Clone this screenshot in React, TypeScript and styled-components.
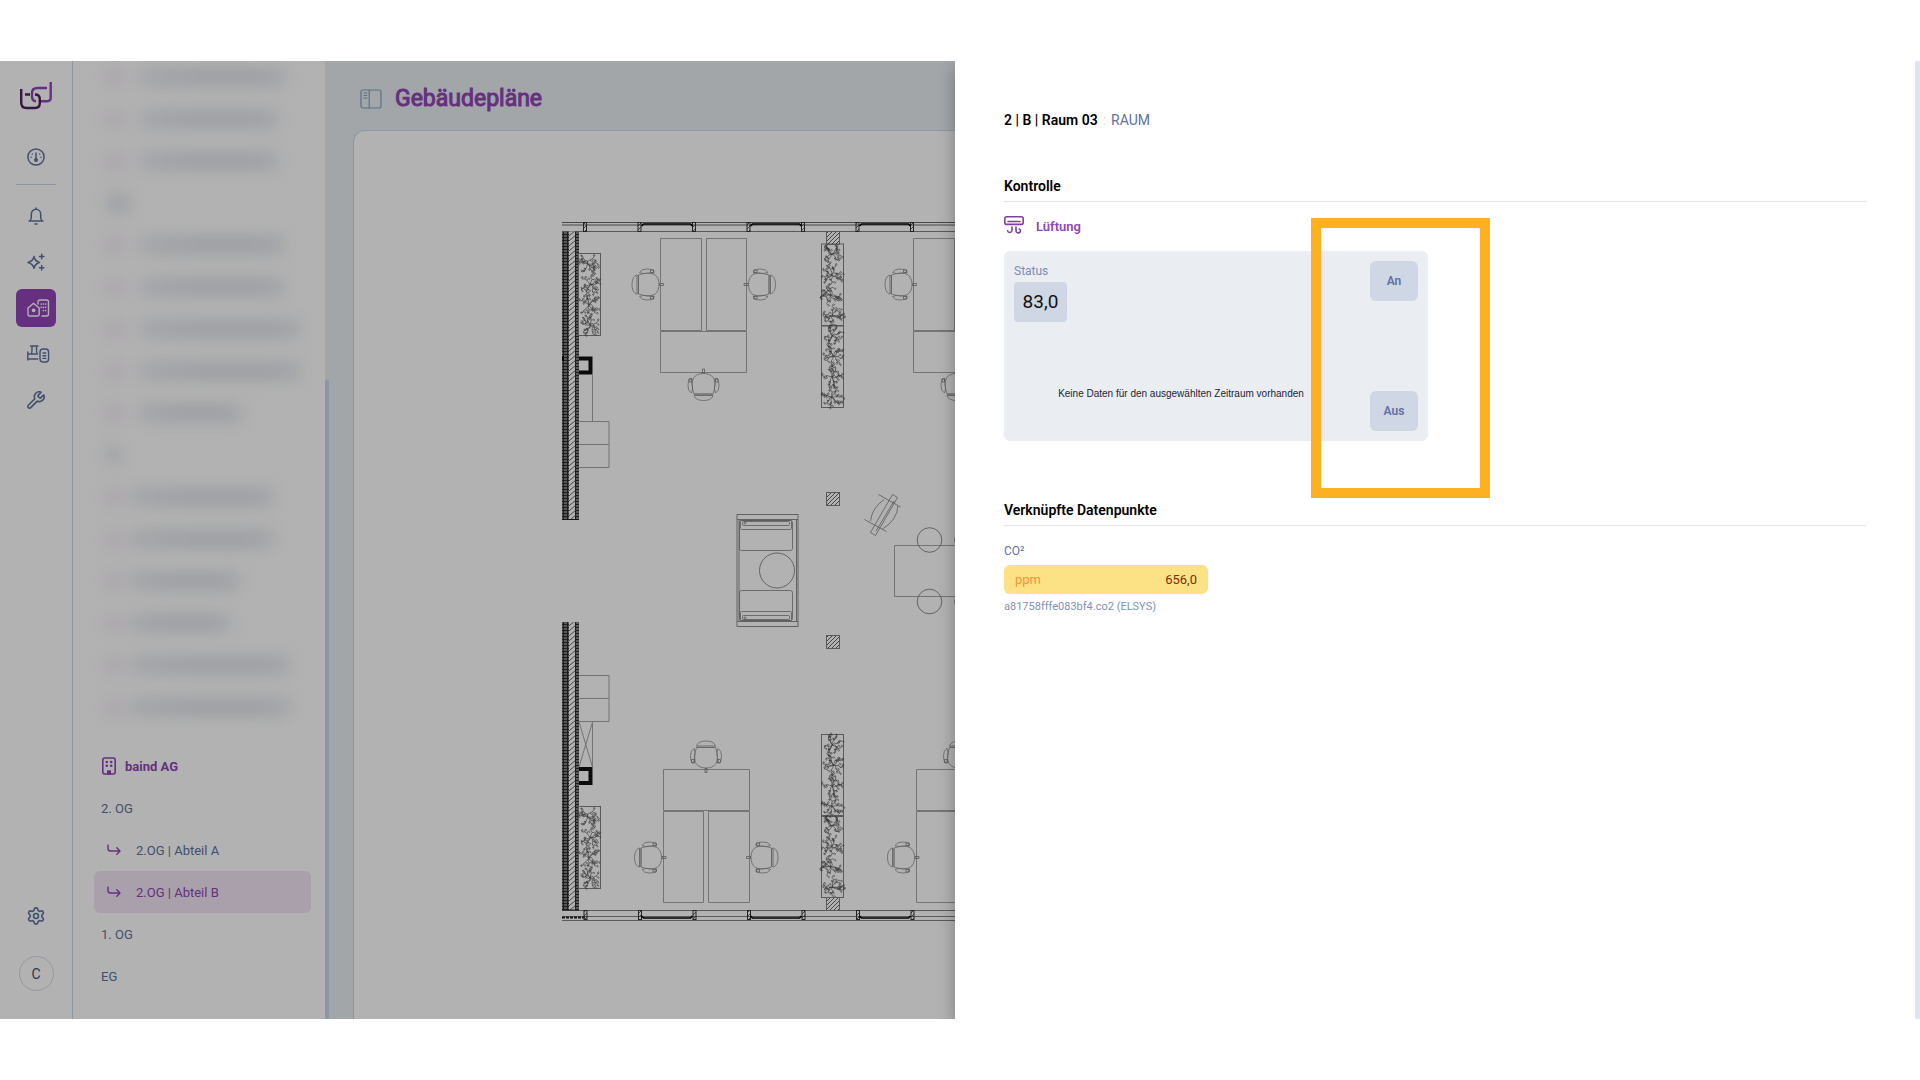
import React from "react";
import styled, { createGlobalStyle, css } from "styled-components";
import { Settings, Wrench } from "lucide-react";

const color = {
  purple: "#9146b6",
  slate: "#5f719f",
  line: "#cbd5e8",
  canvas: "#e8eef2",
  card: "#eaeef3",
  control: "#cfd6e4",
};

const GlobalStyle = createGlobalStyle`
  *, *::before, *::after { box-sizing: border-box; }
  body { margin: 0; background: #fff; font-family: Roboto, "Liberation Sans", sans-serif; }
  h1, h2, h3, p, ul { margin: 0; padding: 0; }
  ul { list-style: none; }
  button { font: inherit; border: 0; padding: 0; background: none; cursor: pointer; }
  a { color: inherit; text-decoration: none; }
  svg { display: block; }
`;

const Page = styled.div`
  padding: 61px 0;
`;

const Frame = styled.div`
  position: relative;
  display: flex;
  height: calc(100vh - 122px);
  min-height: 640px;
  overflow: hidden;
  background: #fff;
`;

const Rail = styled.nav`
  flex: 0 0 73px;
  display: flex;
  flex-direction: column;
  align-items: center;
  padding: 20px 16px 28px;
  border-right: 1px solid ${color.line};
  color: ${color.slate};
`;

const LogoLink = styled.a`
  margin-bottom: 27px;
`;

const RailGroup = styled.ul`
  display: flex;
  flex-direction: column;
  gap: 8px;
  margin-top: 12px;
`;

const RailButton = styled.button<{ $active?: boolean }>`
  display: flex;
  align-items: center;
  width: 40px;
  height: 38px;
  padding-left: 11px;
  border-radius: 6px;
  color: ${(p) => (p.$active ? "#fff" : color.slate)};
  background: ${(p) => (p.$active ? color.purple : "transparent")};
`;

const RailDivider = styled.hr`
  width: 40px;
  margin: 8px 0 0;
  border: 0;
  border-top: 1px solid ${color.line};
`;

const RailFoot = styled.div`
  display: flex;
  flex-direction: column;
  align-items: center;
  gap: 21px;
  margin-top: auto;
`;

const Avatar = styled.button`
  width: 35px;
  height: 35px;
  border: 1px solid #d5d9ec;
  border-radius: 50%;
  font-size: 14px;
  color: #454d73;
`;

const Sidebar = styled.aside`
  flex: 0 0 252px;
  display: flex;
  flex-direction: column;
  justify-content: flex-end;
  padding: 0 14px 22px 21px;
  overflow: hidden;
`;

const TreeList = styled.ul`
  margin-bottom: 17px;
  &:last-child { margin-bottom: 0; }
`;

const rowBase = css`
  display: flex;
  align-items: center;
  height: 42px;
`;

const HiddenRow = styled.li<{ $near?: boolean }>`
  ${rowBase}
  gap: ${(p) => (p.$near ? 8 : 16)}px;
  padding-left: 12px;
  filter: blur(8px);
`;

const HiddenMark = styled.span`
  width: 18px;
  height: 15px;
  background: #f3eaf3;
`;

const HiddenText = styled.span<{ $w: number }>`
  width: ${(p) => p.$w}px;
  height: 18px;
  background: linear-gradient(90deg, #e8ebf1, #dfe3ea 40%, #dfe3ea 80%, #e8ebf1);
`;

const TreeLink = styled.a<{ $active?: boolean; $head?: boolean; $nested?: boolean }>`
  ${rowBase}
  gap: ${(p) => (p.$nested ? 15 : 8)}px;
  padding-left: ${(p) => (p.$nested ? 13 : 7)}px;
  border-radius: 6px;
  font-size: 13px;
  font-weight: ${(p) => (p.$head ? 700 : 400)};
  color: ${(p) => (p.$active || p.$head ? color.purple : color.slate)};
  background: ${(p) => (p.$active ? "#f3e5f5" : "transparent")};
  svg { color: ${color.purple}; }
`;

const ScrollTrack = styled.div`
  flex: 0 0 4px;
  display: flex;
  align-items: flex-end;
  background: ${color.canvas};
`;

const ScrollThumb = styled.div`
  width: 4px;
  height: calc(200% / 3);
  border-radius: 2px;
  background: ${color.line};
`;

const Main = styled.main`
  flex: 1;
  min-width: 0;
  display: flex;
  flex-direction: column;
  padding: 20px 24px 0;
  background: ${color.canvas};
`;

const TitleBar = styled.header`
  display: flex;
  align-items: center;
  gap: 13px;
  height: 36px;
  margin-bottom: 13px;
  padding-left: 7px;
`;

const PanelToggle = styled.button`
  color: #86a0c0;
`;

const Title = styled.h1`
  font-size: 23px;
  line-height: 36px;
  font-weight: 400;
  color: ${color.purple};
  -webkit-text-stroke: 1px ${color.purple};
`;

const PlanPanel = styled.section`
  flex: 1;
  padding: 87px 0 0 208px;
  border: 1px solid ${color.line};
  border-bottom: 0;
  border-radius: 12px 12px 0 0;
  background: #fff;
  overflow: hidden;
`;

const Backdrop = styled.div`
  position: absolute;
  inset: 0;
  background: rgba(0, 0, 0, 0.3);
`;

const Drawer = styled.section`
  position: absolute;
  top: 0;
  right: 0;
  bottom: 0;
  width: calc(50% + 5px);
  padding: 48px 49px 24px;
  border-right: 5px solid #dee5ef;
  background: #fff;
  box-shadow: 0 8px 16px rgba(0, 0, 0, 0.3);
`;

const Crumb = styled.header`
  display: flex;
  gap: 5px;
  margin-bottom: 44px;
  font-size: 14px;
  line-height: 22px;
  color: ${color.slate};
`;

const CrumbTitle = styled.h2`
  font-size: 14px;
  font-weight: 600;
  color: #000;
`;

const CrumbColon = styled.span`
  color: #ccd8ee;
`;

const SectionTitle = styled.h3`
  padding-bottom: 4px;
  border-bottom: 1px solid #e2e5ee;
  font-size: 14px;
  line-height: 22px;
  font-weight: 600;
  color: #000;
`;

const Device = styled.div`
  display: flex;
  gap: 12px;
  margin: 14px 0;
  font-size: 14px;
  line-height: 20px;
  color: ${color.purple};
  svg { color: #7c3fa3; }
`;

const DeviceName = styled.span`
  padding-top: 1px;
  font-size: 13px;
  font-weight: 600;
`;

const StatusCard = styled.div`
  display: flex;
  justify-content: space-between;
  width: 424px;
  height: 190px;
  margin-bottom: 58px;
  padding: 10px;
  border-radius: 6px;
  background: ${color.card};
`;

const StatusBody = styled.div`
  flex: 1;
  display: flex;
  flex-direction: column;
  align-items: flex-start;
`;

const StatusLabel = styled.span`
  font-size: 12px;
  line-height: 20px;
  color: #7a8db5;
`;

const StatusValue = styled.output`
  margin-top: 1px;
  width: 53px;
  border-radius: 4px;
  font-size: 19px;
  line-height: 40px;
  text-align: center;
  color: #111;
  background: ${color.control};
`;

const EmptyNote = styled.p`
  align-self: stretch;
  margin-top: 62px;
  padding-right: 22px;
  font-family: "Liberation Sans", Arial, sans-serif;
  font-size: 10px;
  line-height: 20px;
  text-align: center;
  color: #1c1f33;
`;

const SwitchColumn = styled.div`
  display: flex;
  flex-direction: column;
  justify-content: space-between;
`;

const SwitchButton = styled.button`
  width: 48px;
  height: 40px;
  border-radius: 6px;
  font-size: 12px;
  font-weight: 600;
  color: #6070a3;
  background: ${color.control};
`;

const PointLabel = styled.p`
  margin-top: 15px;
  font-size: 12px;
  line-height: 20px;
  color: #6475a3;
`;

const PointValue = styled.div`
  display: flex;
  justify-content: space-between;
  width: 204px;
  margin: 4px 0 3px;
  padding: 0 11px;
  border-radius: 6px;
  font-size: 13px;
  line-height: 29px;
  color: #7c2d12;
  background: #fde185;
`;

const PointUnit = styled.span`
  color: #fb923c;
`;

const PointSource = styled.p`
  font-size: 11px;
  line-height: 20px;
  color: #7f90b6;
`;

const Highlight = styled.div`
  position: absolute;
  top: 157px;
  left: calc(50% + 351px);
  width: 179px;
  height: 280px;
  border: 10px solid #fdb022;
  pointer-events: none;
`;

/* ---------- icons ---------- */

const stroke = { fill: "none", stroke: "currentColor", strokeLinecap: "round", strokeLinejoin: "round" } as const;

const Logo = () => (
  <svg width="34" height="30" viewBox="0 0 34 30" fill="none" strokeWidth="2.400" strokeLinejoin="round">
    <path d="M28 7H18.500Q13 7 13 12V15Q13 20.200 17 20.200M22 20.200H28Q31.700 20.200 31.700 16.500V1" stroke={color.purple} />
    <path d="M2.200 8V21.500Q2.200 27 7.500 27H16Q20.800 27 20.800 22V18Q20.800 13.500 16 13.500M6 13.500H11" stroke="#4f1f63" />
  </svg>
);

const GaugeIcon = () => (
  <svg width="18" height="18" viewBox="0 0 18 18" {...stroke} strokeWidth="1.5">
    <circle cx="9" cy="9" r="8.100" />
    <path d="M9 5v6" />
    <circle cx="9" cy="12" r="1.200" fill="currentColor" />
    <path d="M4.100 9.200h.01M5.300 6h.01M12.700 6h.01M13.900 9.200h.01" />
  </svg>
);

const BellIcon = () => (
  <svg width="18" height="18" viewBox="0 0 18 18" {...stroke} strokeWidth="1.500">
    <path d="M9 1v1.200M2 14h14M3 14c1-1.200 1.300-2.400 1.300-4V7.200C4.300 4.300 6.300 2.300 9 2.300s4.700 2 4.700 4.900V10c0 1.600.3 2.800 1.300 4M8 17h2" />
  </svg>
);

const SparkIcon = () => (
  <svg width="18" height="18" viewBox="0 0 18 18" {...stroke} strokeWidth="1.500">
    <path d="M7 3.500Q7.900 8.100 12.500 9.500 7.900 10.800 7 15.300 6 10.800 1 9.500 6 8.100 7 3.500ZM14.700 1.300v4.400M12.500 3.500h4.400M14.700 12.500v4.400M12.500 14.700h4.400" />
  </svg>
);

const EstateIcon = () => (
  <svg width="24" height="18" viewBox="1 0 24 18" {...stroke} strokeWidth="1.400">
    <path d="M2 9 7.500 4.200 13.200 9V15q0 2-2 2H4q-2 0-2-2ZM12 5V2.800Q12 1 13.800 1h6.600Q22.500 1 22.500 2.800V15q0 2-2 2h-4.500" />
    <circle cx="7.600" cy="11.300" r="1.200" fill="currentColor" />
    <path d="M15.200 5h.01M17.400 5h.01M19.600 5h.01M15.200 8.300h.01M17.400 8.300h.01M19.600 8.300h.01M17.400 11.500h.01M19.600 11.500h.01" strokeWidth="1.700" />
  </svg>
);

const PlantIcon = () => (
  <svg width="24" height="18" viewBox="1 0 24 18" {...stroke} strokeWidth="1.400">
    <path d="M4.500 1h7.500M6 1v4.500L5.500 9M10.500 1v4.500l.5 3.500M1.800 7v8M1.800 9h9.700M1.800 14h10" />
    <rect x="14" y="4" width="8.600" height="13" rx="3" />
    <path d="M17 8h2.800M17 10.700h2.800M17 13.400h2.800" />
  </svg>
);

const PanelIcon = () => (
  <svg width="22" height="20" viewBox="0 0 22 20" {...stroke} strokeWidth="1.200">
    <rect x="1" y="1" width="20" height="18" rx="2" />
    <path d="M9.200 1v18M4 4h2.800M4 6.500h2.800M4 9h2.800" />
  </svg>
);

const BuildingIcon = () => (
  <svg width="16" height="18" viewBox="0 0 16 18" {...stroke} strokeWidth="1.600">
    <rect x="1.800" y="1" width="12.400" height="16" rx="2" />
    <path d="M5.800 5h.01M10.200 5h.01M5.800 8.700h.01M10.200 8.700h.01" strokeWidth="2.600" />
    <path d="M6.800 17v-3h2.400v3Z" fill="currentColor" />
  </svg>
);

const ArrowIcon = () => (
  <svg width="14" height="12" viewBox="0 0 14 12" {...stroke} strokeWidth="1.400">
    <path d="M1 1v3.500Q1 7 3.500 7H13M9.800 3.800 13 7l-3.200 3.200" />
  </svg>
);

const VentIcon = () => (
  <svg width="20" height="18" viewBox="0 0 20 18" {...stroke} strokeWidth="1.600">
    <rect x=".8" y=".8" width="18.400" height="7.600" rx="2" />
    <path d="M4 5.500h12M8 11v3.700a2.300 2.300 0 0 1-4.500 0M12 11v3.700a2.200 2.200 0 0 0 4.400 0q0-1.500-1.200-1.700" />
  </svg>
);

/* ---------- floor plan ---------- */

const inkThin = "#a6a6a6";
const inkMid = "#828282";

function Chair({ x, y, turn }: { x: number; y: number; turn: number }) {
  // Drawn facing right, its knob on the desk edge at (0, 0)
  return (
    <g transform={`translate(${x} ${y}) rotate(${turn})`} fill="none" stroke="#8f8f8f" strokeWidth=".8">
      <path d="M-22-9.500Q-12-13-6-10 -1.500-7-1.500 0 -1.500 7-6 10 -12 13-22 9.500Z" />
      <path d="M-24-9.500q-4.500 2-4.500 9.500t4.500 9.500l2-1v-17Z" />
      <path d="M-21-12q2-3.500 7-3.500t7.500 1.500v2.500h-5q-6 1.500-9.500-.5ZM-21 12q2 3.500 7 3.500t7.500-1.500v-2.500h-5q-6-1.500-9.500 .5Z" />
      <path d="M-23.500-9v18M-1-1h4v2h-4ZM-10-14.500h3v2.500h-3ZM-10 14.500h3v-2.500h-3Z" stroke={inkMid} />
    </g>
  );
}

function foliage(seed: number, w: number, h: number) {
  let s = seed;
  const rnd = () => {
    s = (s * 16807) % 2147483647;
    return s / 2147483647;
  };
  let d = "";
  const clumps = 4;
  for (let i = 0; i < clumps; i++) {
    const cx = w / 2 + (rnd() - 0.5) * 4;
    const cy = ((i + 0.5) * h) / clumps;
    for (let k = 0; k < 9; k++) {
      const a = (k / 9) * Math.PI * 2 + rnd() * 0.6;
      let px = cx;
      let py = cy;
      let dir = a;
      d += `M${px.toFixed(1)} ${py.toFixed(1)}`;
      for (let j = 0; j < 4; j++) {
        // each stem wanders a little and carries a round leaf at its joints
        dir = a + (rnd() - 0.5) * 1.6;
        px += Math.cos(dir) * 2.6;
        py += Math.sin(dir) * 2.6;
        d += `L${px.toFixed(1)} ${py.toFixed(1)}`;
        if (j > 0) {
          const side = dir + (rnd() > 0.5 ? 1.2 : -1.2);
          const lx = px + Math.cos(side) * 2;
          const ly = py + Math.sin(side) * 2;
          d += `L${lx.toFixed(1)} ${ly.toFixed(1)}a.8 .8 0 1 1 .5 1M${px.toFixed(1)} ${py.toFixed(1)}`;
        }
      }
    }
  }
  return d;
}

function Planter({ x, y, w = 22, h = 82, seed }: { x: number; y: number; w?: number; h?: number; seed: number }) {
  return (
    <g transform={`translate(${x} ${y})`} fill="none">
      <rect width={w} height={h} stroke={inkMid} />
      <path d={foliage(seed, w, h)} stroke="#4a4a4a" strokeWidth=".6" />
    </g>
  );
}

function WallSegment({ y, h }: { y: number; h: number }) {
  return (
    <g>
      <rect x="562" y={y} width="17" height={h} fill="#fff" />
      <rect x="562" y={y} width="7" height={h} fill="url(#brick)" />
      <rect x="569" y={y} width="6" height={h} fill="url(#hatch)" />
      <rect x="575" y={y} width="4" height={h} fill="url(#brick)" />
      <path d={`M562 ${y + h}h17`} stroke="#222" />
    </g>
  );
}

const Pillar = ({ y }: { y: number }) => (
  <rect x="826.500" y={y} width="13" height="13" fill="url(#wideHatch)" stroke={inkMid} />
);

const Bracket = ({ y }: { y: number }) => (
  <path d={`M579 ${y + 2}h11.500v14H579`} fill="none" stroke="#111" strokeWidth="4" />
);

function DeskTop({ dx }: { dx: number }) {
  return (
    <g transform={`translate(${dx} 0)`}>
      <g fill="none" stroke={inkThin}>
        <path d="M660.500 238.500h41v92h-41ZM706.500 238.500h40v92h-40ZM660.500 331.500h86v41h-86Z" />
      </g>
      <Chair x={660.5} y={284.500} turn={0} />
      <Chair x={747} y={284.500} turn={180} />
      <Chair x={703.500} y={372} turn={-90} />
    </g>
  );
}

function DeskBottom({ dx }: { dx: number }) {
  return (
    <g transform={`translate(${dx} 0)`}>
      <g fill="none" stroke={inkThin}>
        <path d="M663.500 769.500h86v41h-86ZM663.500 811.500h40v91h-40ZM708.500 811.500h41v91h-41Z" />
      </g>
      <Chair x={663} y={857.500} turn={0} />
      <Chair x={749.500} y={857.500} turn={180} />
      <Chair x={706} y={769.500} turn={90} />
    </g>
  );
}

function Sofa() {
  return (
    <g fill="none" stroke={inkMid} strokeWidth=".8">
      <rect x="739.500" y="520.500" width="53" height="30" rx="2" />
      <rect x="740.500" y="520.500" width="51" height="9" rx="1" />
      <rect x="742.500" y="521.500" width="47" height="4" rx="1" />
      <circle cx="745" cy="523" r="1" />
    </g>
  );
}

function FloorPlan() {
  const posts = [585, 639.500, 694, 748.500, 803, 857.500, 912, 966];
  const windows = [639.500, 748.500, 857.500];
  return (
    <svg width="400" height="706" viewBox="562 218 400 706" role="img" aria-label="Grundriss 2.OG Abteil B">
      <defs>
        <pattern id="brick" width="4" height="3" patternUnits="userSpaceOnUse">
          <rect width="4" height="3" fill="#808080" />
          <path d="M0 .5h4M3.500 0v3" stroke="#2c2c2c" />
        </pattern>
        <pattern id="hatch" width="6" height="5" patternUnits="userSpaceOnUse">
          <path d="M0 5 6 0M-1 1 1-1M5 6 7 4" stroke="#555" strokeWidth=".9" />
        </pattern>
        <pattern id="wideHatch" width="4" height="4" patternUnits="userSpaceOnUse">
          <path d="M-1 1 1-1M0 4 4 0M3 5 5 3" stroke="#555" strokeWidth=".9" />
        </pattern>
      </defs>

      <path d="M562 222.500h400M562 225h400" stroke="#666" />
      <path d="M562 231.500h400" stroke={inkMid} />
      <path d="M562 910.500h400M562 916.500h400M562 920.500h400" stroke={inkMid} />
      <path d="M562 917.500h24" stroke="#222" strokeWidth="2" strokeDasharray="3 1" />
      {posts.map((x) => (
        <g key={x} fill="url(#wideHatch)" stroke="#333">
          <rect x={x - 1.500} y="222.500" width="3" height="9" />
          <rect x={x - 1} y="910.500" width="3" height="9" />
        </g>
      ))}
      {windows.map((x) => (
        <g key={x} fill="none" stroke="#000" strokeWidth="1.600">
          <path d={`M${x + 2} 226l2-2h47l2 2`} />
          <path d={`M${x + 2} 916l2 2h47l2-2`} />
        </g>
      ))}

      <WallSegment y={231.500} h={288} />
      <WallSegment y={622} h={288} />
      <rect x="562" y="356" width="2" height="5" fill="#000" />

      <Planter x={578.500} y={253.500} seed={1187} />
      <Planter x={578.500} y={806.500} seed={1187} />
      <Planter x={821.500} y={244} seed={29411} />
      <Planter x={821.500} y={325.500} seed={53077} />
      <Planter x={821.500} y={734.500} seed={53077} />
      <Planter x={821.500} y={815.500} seed={29411} />

      <Bracket y={356.500} />
      <Bracket y={767} />
      <g fill="none" stroke={inkThin}>
        <path d="M592.500 375v46M579 421.500h30v46H579M579 444.500h30" />
        <path d="M579 675.500h30v46H579M579 698.500h30M592.500 722v45M579 722l13.500 45M592.500 722 579 767" />
      </g>

      <Pillar y={231.500} />
      <Pillar y={492.500} />
      <Pillar y={635.500} />
      <Pillar y={897.500} />

      <DeskTop dx={0} />
      <DeskTop dx={253} />
      <DeskBottom dx={0} />
      <DeskBottom dx={253} />

      <g fill="none" stroke={inkMid} strokeWidth=".9">
        <rect x="737" y="514.500" width="61" height="112" />
        <path d="M737 519.500h61M737 621.500h61M739 519.500v102M796.500 519.500v102" />
        <circle cx="777" cy="570.500" r="17.500" />
      </g>
      <Sofa />
      <g transform="translate(0 1141) scale(1 -1)">
        <Sofa />
      </g>

      <g fill="none" stroke={inkMid} strokeWidth=".8">
        <path d="M892.500 494.500 897.500 497.500 875.500 535.500 870.500 532.500Z" />
        <path d="M884 499.500Q872 508 870.500 521M898 506Q897 520 882.500 529" />
        <path d="M878.500 494.500 900.500 507M864.500 519.500 886.500 531.500M894 501 876 531" />
      </g>
      <g fill="none" stroke={inkThin}>
        <path d="M962 545.500h-67.500v51H962" />
        <g stroke={inkMid} strokeWidth=".9">
          <circle cx="929.500" cy="540" r="12.300" />
          <circle cx="929.500" cy="601.500" r="12.300" />
          <circle cx="967" cy="540" r="12.300" />
          <circle cx="967" cy="601.500" r="12.300" />
        </g>
      </g>
    </svg>
  );
}

/* ---------- data ---------- */

const railItems = [
  { label: "Meldungen", icon: <BellIcon /> },
  { label: "Assistent", icon: <SparkIcon /> },
  { label: "Gebäudepläne", icon: <EstateIcon />, active: true },
  { label: "Anlagen", icon: <PlantIcon /> },
  { label: "Wartung", icon: <Wrench size={18} viewBox="1 1 22 22" strokeWidth={2} /> },
];

const hiddenRows = [
  { w: 146 }, { w: 138 }, { w: 138 },
  { w: 24, head: true },
  { w: 144 }, { w: 144 }, { w: 160 }, { w: 160 }, { w: 102 },
  { w: 14, head: true },
  { w: 142, near: true }, { w: 142, near: true }, { w: 108, near: true },
  { w: 98, near: true }, { w: 158, near: true }, { w: 158, near: true },
];

const floors = [
  { label: "2. OG" },
  { label: "2.OG | Abteil A", nested: true },
  { label: "2.OG | Abteil B", nested: true, active: true },
  { label: "1. OG" },
  { label: "EG" },
];

export default function App() {
  return (
    <Page>
      <GlobalStyle />
      <Frame>
        <Rail>
          <LogoLink href="#" aria-label="Startseite"><Logo /></LogoLink>
          <RailButton aria-label="Übersicht"><GaugeIcon /></RailButton>
          <RailDivider />
          <RailGroup>
            {railItems.map((item) => (
              <li key={item.label}>
                <RailButton aria-label={item.label} $active={item.active}>{item.icon}</RailButton>
              </li>
            ))}
          </RailGroup>
          <RailFoot>
            <RailButton aria-label="Einstellungen"><Settings size={18} viewBox="1 1 22 22" strokeWidth={2} /></RailButton>
            <Avatar>C</Avatar>
          </RailFoot>
        </Rail>

        <Sidebar>
          <TreeList aria-hidden="true">
            {hiddenRows.map((row, i) => (
              <HiddenRow key={i} $near={row.near}>
                {!row.head && <HiddenMark />}
                <HiddenText $w={row.w} />
              </HiddenRow>
            ))}
          </TreeList>
          <TreeList>
            <li><TreeLink href="#" $head><BuildingIcon />baind AG</TreeLink></li>
            {floors.map((f) => (
              <li key={f.label}>
                <TreeLink href="#" $nested={f.nested} $active={f.active}>
                  {f.nested && <ArrowIcon />}
                  {f.label}
                </TreeLink>
              </li>
            ))}
          </TreeList>
        </Sidebar>
        <ScrollTrack><ScrollThumb /></ScrollTrack>

        <Main>
          <TitleBar>
            <PanelToggle aria-label="Seitenleiste umschalten"><PanelIcon /></PanelToggle>
            <Title>Gebäudepläne</Title>
          </TitleBar>
          <PlanPanel><FloorPlan /></PlanPanel>
        </Main>

        <Backdrop />

        <Drawer>
          <Crumb>
            <CrumbTitle>2 | B | Raum 03</CrumbTitle>
            <CrumbColon>:</CrumbColon>
            <span>RAUM</span>
          </Crumb>
          <SectionTitle>Kontrolle</SectionTitle>
          <Device><VentIcon /><DeviceName>Lüftung</DeviceName></Device>
          <StatusCard>
            <StatusBody>
              <StatusLabel>Status</StatusLabel>
              <StatusValue>83,0</StatusValue>
              <EmptyNote>Keine Daten für den ausgewählten Zeitraum vorhanden</EmptyNote>
            </StatusBody>
            <SwitchColumn>
              <SwitchButton>An</SwitchButton>
              <SwitchButton>Aus</SwitchButton>
            </SwitchColumn>
          </StatusCard>
          <SectionTitle>Verknüpfte Datenpunkte</SectionTitle>
          <PointLabel>CO²</PointLabel>
          <PointValue><PointUnit>ppm</PointUnit><span>656,0</span></PointValue>
          <PointSource>a81758fffe083bf4.co2 (ELSYS)</PointSource>
        </Drawer>
        <Highlight />
      </Frame>
    </Page>
  );
}
